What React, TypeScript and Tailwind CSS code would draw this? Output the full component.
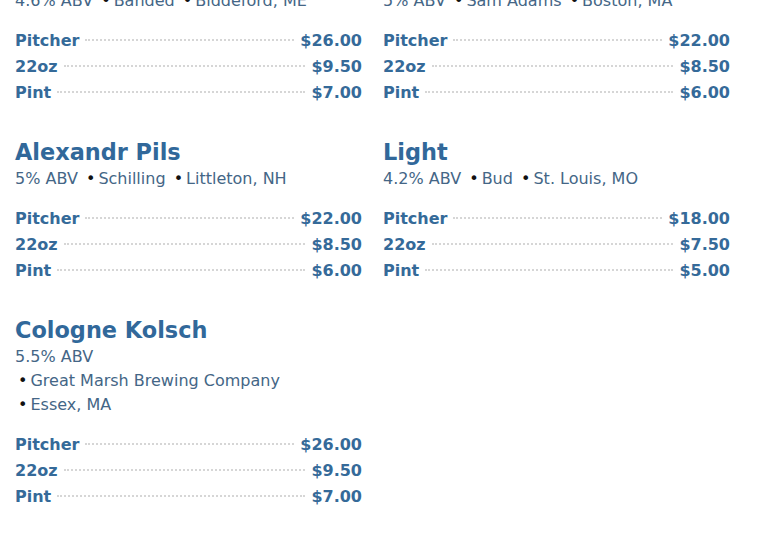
type Beer = {
  name: string;
  abv: string;
  brewer: string;
  location: string;
  prices: { size: string; price: string }[];
};

const beers: Beer[] = [
  {
    name: "Veil Pale Ale",
    abv: "4.6% ABV",
    brewer: "Banded",
    location: "Biddeford, ME",
    prices: [
      { size: "Pitcher", price: "$26.00" },
      { size: "22oz", price: "$9.50" },
      { size: "Pint", price: "$7.00" },
    ],
  },
  {
    name: "Boston Lager",
    abv: "5% ABV",
    brewer: "Sam Adams",
    location: "Boston, MA",
    prices: [
      { size: "Pitcher", price: "$22.00" },
      { size: "22oz", price: "$8.50" },
      { size: "Pint", price: "$6.00" },
    ],
  },
  {
    name: "Alexandr Pils",
    abv: "5% ABV",
    brewer: "Schilling",
    location: "Littleton, NH",
    prices: [
      { size: "Pitcher", price: "$22.00" },
      { size: "22oz", price: "$8.50" },
      { size: "Pint", price: "$6.00" },
    ],
  },
  {
    name: "Light",
    abv: "4.2% ABV",
    brewer: "Bud",
    location: "St. Louis, MO",
    prices: [
      { size: "Pitcher", price: "$18.00" },
      { size: "22oz", price: "$7.50" },
      { size: "Pint", price: "$5.00" },
    ],
  },
  {
    name: "Cologne Kolsch",
    abv: "5.5% ABV",
    brewer: "Great Marsh Brewing Company",
    location: "Essex, MA",
    prices: [
      { size: "Pitcher", price: "$26.00" },
      { size: "22oz", price: "$9.50" },
      { size: "Pint", price: "$7.00" },
    ],
  },
];

function Meta({ text }: { text: string }) {
  return (
    <span className="ml-[3px] inline-block whitespace-nowrap">
      <span className="mr-[3px] text-[#111]">•</span>
      {text}
    </span>
  );
}

function BeerCard({ beer }: { beer: Beer }) {
  return (
    <div>
      <h2 className="text-[22.4px] leading-[30px] font-bold text-[#31689a]">{beer.name}</h2>
      <p className="text-[16px] leading-[24px] text-[#446686]">
        {beer.abv} <Meta text={beer.brewer} /> <Meta text={beer.location} />
      </p>
      <ul className="mt-[15px]">
        {beer.prices.map((p) => (
          <li key={p.size} className="flex h-[26px] items-center text-[16px] font-bold text-[#356a99]">
            <span>{p.size}</span>
            <span className="mx-[6px] flex-1 -translate-y-px border-b-2 border-dotted border-[#d6d6d6]" />
            <span>{p.price}</span>
          </li>
        ))}
      </ul>
    </div>
  );
}

export default function App() {
  return (
    <div className="h-[540px] overflow-hidden bg-white font-['DejaVu_Sans',sans-serif]">
      <div className="mt-[-41px] grid grid-cols-[347px_347px] gap-x-[21px] gap-y-[31px] pl-[15px]">
        {beers.map((b) => (
          <BeerCard key={b.name} beer={b} />
        ))}
      </div>
    </div>
  );
}
